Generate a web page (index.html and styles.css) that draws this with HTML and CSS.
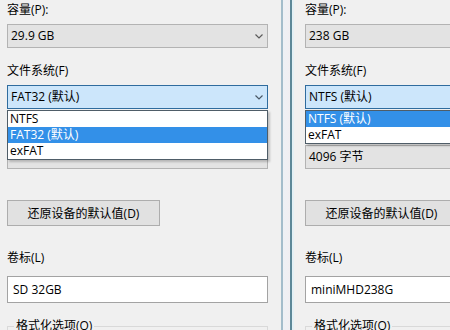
FILE: index.html
```html
<!DOCTYPE html>
<html lang="zh-CN">
<head>
    <meta charset="UTF-8">
    <title>格式化</title>
    <link rel="stylesheet" href="styles.css">
</head>
<body>

<div class="desktop">
    <!-- Left dialog: SD card -->
    <div class="panel panel-left">
        <div class="field field-first">
            <div class="label">容量(P):</div>
            <div class="select">29.9 GB
                <svg class="chevron" width="8" height="5" viewBox="0 0 8 5"><polyline points="0.5,0.5 4,4 7.5,0.5" fill="none" stroke="#5a5a5a" stroke-width="1.2"/></svg>
            </div>
        </div>

        <div class="field field-fs">
            <div class="label">文件系统(F)</div>
            <div class="combo">
                <div class="select select-open">FAT32 (默认)
                    <svg class="chevron" width="8" height="5" viewBox="0 0 8 5"><polyline points="0.5,0.5 4,4 7.5,0.5" fill="none" stroke="#4a5866" stroke-width="1.2"/></svg>
                </div>
                <ul class="dropdown">
                    <li>NTFS</li>
                    <li class="active">FAT32 (默认)</li>
                    <li>exFAT</li>
                </ul>
            </div>
        </div>

        <!-- allocation unit row, covered by the open list -->
        <div class="field field-unit">
            <div class="label"></div>
            <div class="select"></div>
        </div>

        <button class="btn">还原设备的默认值(D)</button>

        <div class="field field-volume">
            <div class="label">卷标(L)</div>
            <div class="textbox">SD 32GB</div>
        </div>

        <fieldset class="group">
            <legend>格式化选项(O)</legend>
        </fieldset>
    </div>

    <!-- Window frame between the two dialogs -->
    <div class="frame"></div>

    <!-- Right dialog: USB disk -->
    <div class="panel panel-right">
        <div class="field field-first">
            <div class="label">容量(P):</div>
            <div class="select">238 GB</div>
        </div>

        <div class="field field-fs">
            <div class="label">文件系统(F)</div>
            <div class="combo">
                <div class="select select-open">NTFS (默认)</div>
                <ul class="dropdown">
                    <li class="active">NTFS (默认)</li>
                    <li>exFAT</li>
                </ul>
            </div>
        </div>

        <div class="field field-unit">
            <div class="label"></div>
            <div class="select">4096 字节</div>
        </div>

        <button class="btn">还原设备的默认值(D)</button>

        <div class="field field-volume">
            <div class="label">卷标(L)</div>
            <div class="textbox">miniMHD238G</div>
        </div>

        <fieldset class="group">
            <legend>格式化选项(O)</legend>
        </fieldset>
    </div>
</div>

</body>
</html>
```

FILE: styles.css
```css
body {
    margin: 0;
    background-color: #f0f0f0;
    font-family: "Open Sans", "Noto Sans CJK SC", sans-serif;
    font-size: 12px;
    color: #000;
    overflow: hidden;
}
.desktop {
    display: flex;
    width: 450px;
    height: 330px;
    overflow: hidden;
}
.panel {
    flex: none;
    width: 261px;
    padding-top: 1px;
}
.panel-left {
    padding-left: 7px;
    padding-right: 13px;
}
.panel-right {
    padding-left: 11px;
}
/* frame of the second window */
.frame {
    flex: none;
    width: 13px;
    height: 330px;
    background: linear-gradient(to right,
        #a4bccb 0, #a4bccb 2px,
        #eef0f5 2px, #f1eef2 9px,
        #5d8898 9px, #5d8898 11px,
        #e3f0f5 11px, #e3f0f5 13px);
}
.label {
    height: 18px;
    line-height: 18px;
    margin-bottom: 5px;
    white-space: nowrap;
}
.field-fs {
    margin-top: 14px;
}
.field-unit {
    margin-top: 13px;
}
.field-volume {
    margin-top: 23px;
}
.field-volume .label {
    margin-bottom: 9px;
}
.combo {
    position: relative;
    z-index: 2;
}
.select {
    position: relative;
    box-sizing: border-box;
    height: 24px;
    line-height: 22px;
    padding-left: 3px;
    background-color: #e3e3e3;
    border: 1px solid #b3b3b3;
    white-space: nowrap;
}
.select-open {
    background-color: #cce6fb;
    border-color: #2f6c9e;
}
.chevron {
    position: absolute;
    right: 4px;
    top: 9px;
}
.dropdown {
    position: absolute;
    left: 0;
    right: 0;
    top: calc(100% + 1px);
    margin: 0;
    padding: 0;
    list-style: none;
    background-color: #fff;
    border: 1px solid #4f5d68;
    box-shadow: 2px 2px 2px rgba(0, 0, 0, 0.2);
}
.dropdown li {
    height: 16px;
    line-height: 16px;
    padding-left: 2px;
    white-space: nowrap;
}
.dropdown li.active {
    background-color: #3390e8;
    color: #fff;
}
.btn {
    display: block;
    box-sizing: border-box;
    width: 153px;
    height: 26px;
    margin-top: 31px;
    padding: 0;
    font: inherit;
    color: #000;
    background-color: #e1e1e1;
    border: 1px solid #adadad;
}
.textbox {
    box-sizing: border-box;
    height: 27px;
    line-height: 25px;
    padding-left: 5px;
    background-color: #fff;
    border: 1px solid #a3a3a3;
    white-space: nowrap;
}
.group {
    margin: 14px 0 0 0;
    padding: 0 0 20px 0;
    border: 1px solid #d9d9d9;
}
.group legend {
    margin-left: 6px;
    padding: 0 2px;
    line-height: 18px;
}
```
